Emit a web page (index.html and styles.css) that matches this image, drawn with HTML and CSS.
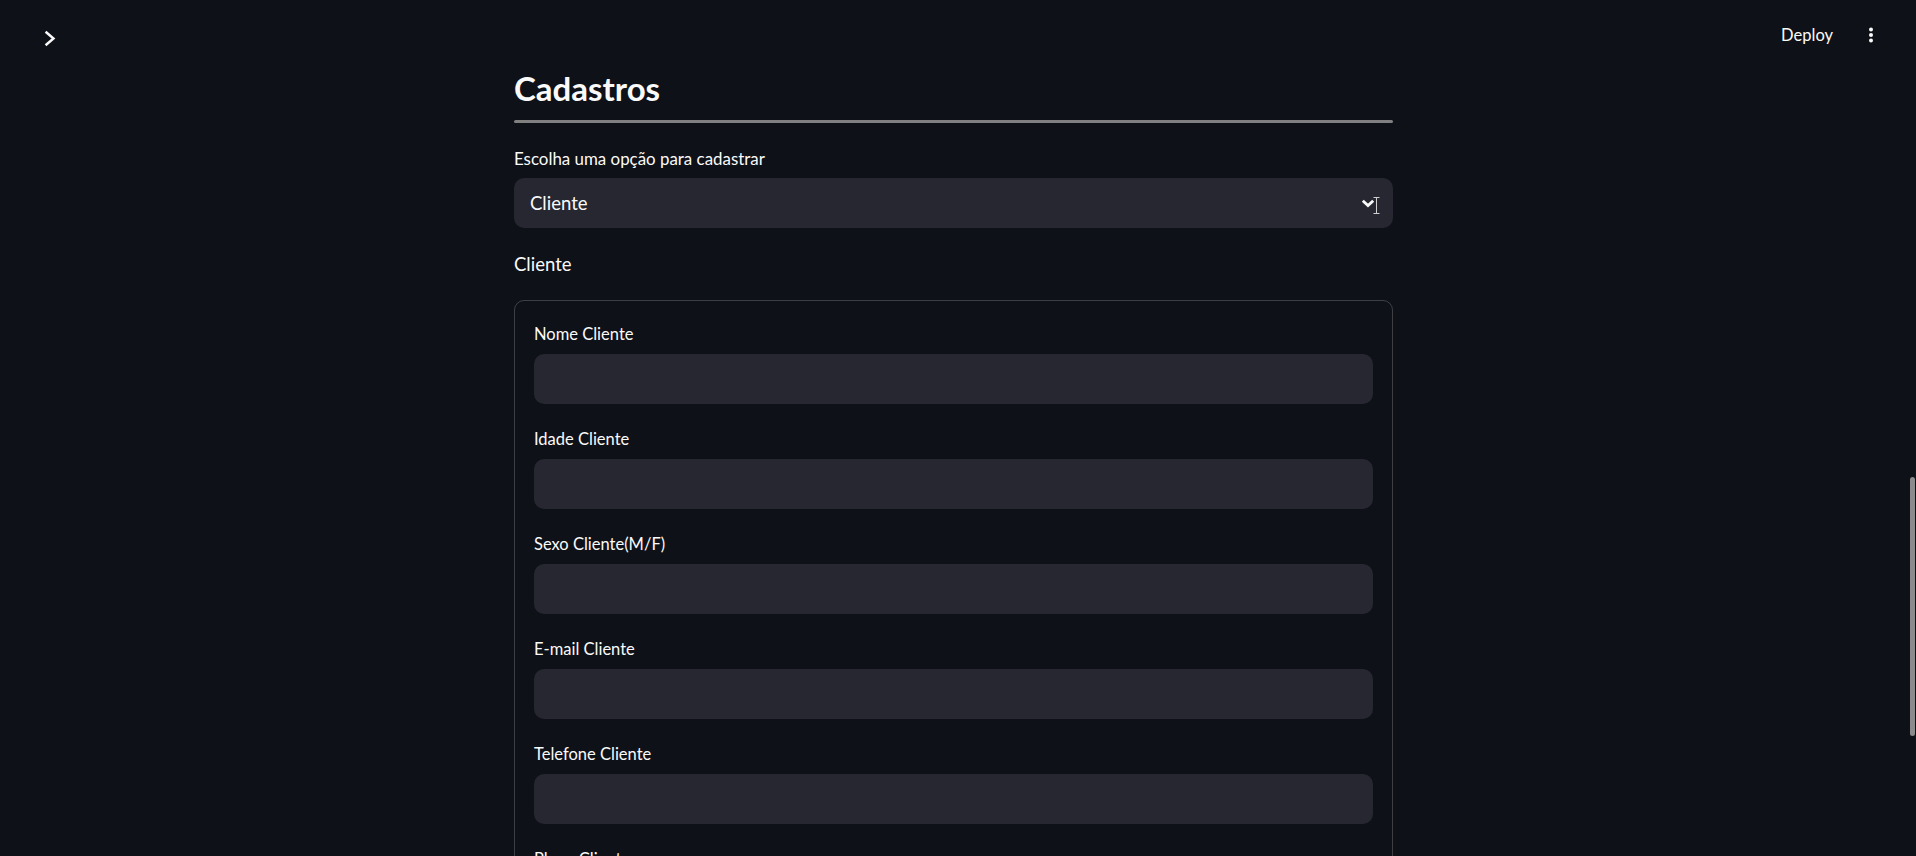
FILE: index.html
```html
<!DOCTYPE html>
<html lang="pt">
<head>
<meta charset="utf-8">
<title>Cadastros</title>
<link rel="stylesheet" href="styles.css">
</head>
<body>
<header class="topbar">
  <svg class="sidebar-toggle" width="12" height="17" viewBox="0 0 12 17"><path d="M2.5 2.5 L9.5 8.5 L2.5 14.5" fill="none" stroke="#fafafa" stroke-width="2.4" stroke-linecap="square"/></svg>
  <div class="topbar-right">
    <span class="deploy">Deploy</span>
    <svg class="menu-dots" width="6" height="16" viewBox="0 0 6 16"><circle cx="3" cy="2.5" r="2"/><circle cx="3" cy="8" r="2"/><circle cx="3" cy="13.5" r="2"/></svg>
  </div>
</header>
<div class="app">
  <main class="main">
    <h2 class="title">Cadastros</h2>
    <div class="divider"></div>
    <label class="widget-label select-label">Escolha uma opção para cadastrar</label>
    <div class="select">
      <span class="select-value">Cliente</span>
      <svg class="select-chevron" width="14" height="9" viewBox="0 0 14 9"><path d="M1.8 1.8 L7 6.6 L12.2 1.8" fill="none" stroke="#fafafa" stroke-width="2.8"/></svg>
      <svg class="ibeam" width="7" height="17" viewBox="0 0 7 17"><path d="M0.5 0.5 H6.5 M3.5 0.5 V16.5 M0.5 16.5 H6.5" fill="none" stroke="#cfcfcf" stroke-width="1"/></svg>
    </div>
    <h3 class="subheader">Cliente</h3>
    <div class="form">
      <div class="field"><label class="widget-label">Nome Cliente</label><div class="input"></div></div>
      <div class="field"><label class="widget-label">Idade Cliente</label><div class="input"></div></div>
      <div class="field"><label class="widget-label">Sexo Cliente(M/F)</label><div class="input"></div></div>
      <div class="field"><label class="widget-label">E-mail Cliente</label><div class="input"></div></div>
      <div class="field"><label class="widget-label">Telefone Cliente</label><div class="input"></div></div>
      <div class="field"><label class="widget-label">Plano Cliente</label><div class="input"></div></div>
    </div>
  </main>
</div>
<div class="scroll-thumb"></div>
</body>
</html>
```
FILE: styles.css
```css
html, body {
  margin: 0;
  padding: 0;
  height: 100%;
  overflow: hidden;
}
body {
  background: #0e1117;
  color: #fafafa;
  font-family: Lato, "Noto Sans", sans-serif;
}
.topbar {
  height: 68px;
  box-sizing: border-box;
  padding: 24px 42px 0 44px;
  display: flex;
  justify-content: space-between;
  align-items: flex-start;
}
.sidebar-toggle {
  margin-top: 6px;
  display: block;
}
.topbar-right {
  display: flex;
  align-items: center;
  gap: 35px;
}
.deploy {
  font-size: 16.5px;
  line-height: 22px;
  color: #fafafa;
}
.menu-dots {
  fill: #fafafa;
  display: block;
}
.app {
  display: flex;
  justify-content: center;
  padding-right: 9px;
}
.main {
  width: 879px;
  display: flex;
  flex-direction: column;
}
.title {
  margin: 0;
  font-size: 33px;
  line-height: 41px;
  font-weight: 700;
}
.divider {
  margin-top: 11px;
  height: 3px;
  background: #808080;
  border-radius: 2px;
}
.widget-label {
  display: block;
  font-size: 16.5px;
  line-height: 22px;
  color: #fafafa;
}
.select-label {
  margin-top: 25px;
  font-size: 16.9px;
}
.select {
  position: relative;
  margin-top: 8px;
  height: 50px;
  background: #262730;
  border-radius: 10px;
  display: flex;
  align-items: center;
  justify-content: space-between;
  padding: 0 18px 0 16px;
}
.select-value {
  font-size: 18.5px;
}
.select-chevron {
  display: block;
  margin-top: 1px;
}
.ibeam {
  position: absolute;
  right: 13px;
  top: 19px;
}
.subheader {
  margin: 23px 0 0 0;
  font-size: 18.5px;
  line-height: 26px;
  font-weight: 400;
}
.form {
  margin-top: 23px;
  border: 1px solid rgba(250, 250, 250, 0.2);
  border-radius: 10px;
  padding: 22px 19px 20px 19px;
  display: flex;
  flex-direction: column;
  gap: 24px;
}
.field {
  display: flex;
  flex-direction: column;
  gap: 9px;
}
.input {
  height: 50px;
  background: #262730;
  border-radius: 10px;
}
.scroll-thumb {
  position: fixed;
  right: 1px;
  top: 477px;
  width: 5px;
  height: 259px;
  border-radius: 3px;
  background: #8b8b8b;
}
```
